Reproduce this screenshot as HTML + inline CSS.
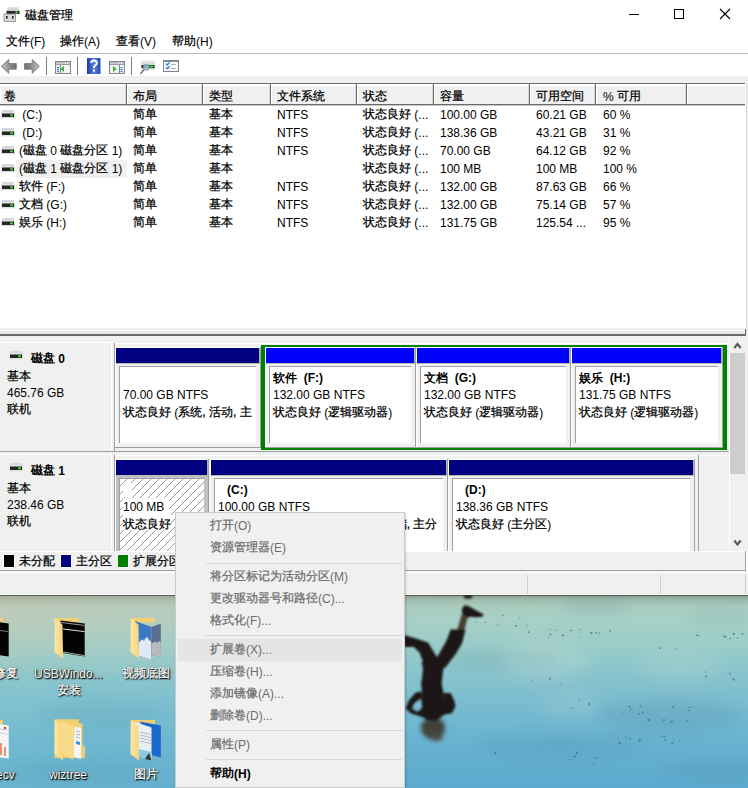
<!DOCTYPE html>
<html><head><meta charset="utf-8"><style>
html,body{margin:0;padding:0;}
body{width:748px;height:788px;overflow:hidden;position:relative;background:#fff;font-family:"Liberation Sans",sans-serif;}
div{position:absolute;}
.t{white-space:nowrap;-webkit-text-stroke:0.25px currentColor;} .l{position:relative;top:1px;-webkit-text-stroke:0;} .l0{-webkit-text-stroke:0;}
svg{display:block;}
</style></head><body>
<svg style="position:absolute;left:3px;top:6px" width="18" height="17" viewBox="0 0 18 17">
<defs><linearGradient id="gt" x1="0" y1="0" x2="0" y2="1"><stop offset="0" stop-color="#e6e8ea"/><stop offset="1" stop-color="#c4c8cc"/></linearGradient></defs>
<path d="M4.5 1 L15.5 1 L16.5 5 L3.5 5 Z" fill="url(#gt)"/>
<rect x="3.5" y="5" width="13" height="3" fill="#2b2b2b"/>
<circle cx="13.5" cy="6.5" r="1.2" fill="#30e030"/>
<rect x="1" y="8" width="11.5" height="7.5" fill="#d8dadc" stroke="#8a8a8a" stroke-width="0.8"/>
<rect x="3" y="10" width="1.6" height="2.6" fill="#222"/>
<rect x="9" y="10" width="1.6" height="2.6" fill="#222"/>
</svg>
<div class="t" style="left:25px;top:5px;font-size:12px;line-height:20px;color:#000;font-weight:normal;">磁盘管理</div>
<div style="left:629px;top:14px;width:10px;height:1px;background:#000;"></div>
<div style="left:674px;top:9px;width:10px;height:10px;background:transparent;border:1px solid #000;box-sizing:border-box"></div>
<svg style="position:absolute;left:719px;top:8px" width="12" height="12" viewBox="0 0 12 12"><path d="M1 1 L11 11 M11 1 L1 11" stroke="#000" stroke-width="1.1"/></svg>
<div class="t" style="left:6px;top:32px;font-size:12px;line-height:18px;color:#000;font-weight:normal;">文件<span class="l">(F)</span></div>
<div class="t" style="left:60px;top:32px;font-size:12px;line-height:18px;color:#000;font-weight:normal;">操作<span class="l">(A)</span></div>
<div class="t" style="left:116px;top:32px;font-size:12px;line-height:18px;color:#000;font-weight:normal;">查看<span class="l">(V)</span></div>
<div class="t" style="left:172px;top:32px;font-size:12px;line-height:18px;color:#000;font-weight:normal;">帮助<span class="l">(H)</span></div>
<div style="left:0px;top:53px;width:748px;height:1px;background:#b9bcc0;"></div>
<div style="left:0px;top:54px;width:748px;height:22px;background:#fff;"></div>
<svg style="position:absolute;left:0px;top:56px" width="44" height="20" viewBox="0 56 44 20">
<defs><linearGradient id="ga" x1="0" y1="0" x2="1" y2="0"><stop offset="0" stop-color="#c4c4c4"/><stop offset="0.6" stop-color="#8a8a8a"/><stop offset="1" stop-color="#6c6c6c"/></linearGradient>
<linearGradient id="gb" x1="1" y1="0" x2="0" y2="0"><stop offset="0" stop-color="#c4c4c4"/><stop offset="0.6" stop-color="#8a8a8a"/><stop offset="1" stop-color="#6c6c6c"/></linearGradient></defs>
<path d="M1.3 66.3 L8.8 59.6 L8.8 63.6 L16.3 63.6 L16.3 69.2 L8.8 69.2 L8.8 73.3 Z" fill="url(#ga)" stroke="#7a7a7a" stroke-width="0.9" stroke-linejoin="round"/>
<path d="M39.5 66.3 L32.2 59.6 L32.2 63.6 L24.5 63.6 L24.5 69.2 L32.2 69.2 L32.2 73.3 Z" fill="url(#gb)" stroke="#7a7a7a" stroke-width="0.9" stroke-linejoin="round"/>
</svg>
<div style="left:46px;top:57px;width:1px;height:18px;background:#808080;"></div>
<div style="left:77px;top:57px;width:1px;height:18px;background:#808080;"></div>
<div style="left:131px;top:57px;width:1px;height:18px;background:#808080;"></div>
<svg style="position:absolute;left:55px;top:61px" width="16" height="13" viewBox="0 0 16 13">
<rect x="0.5" y="0.5" width="15" height="12" fill="#f4f4f4" stroke="#7c8590"/>
<rect x="1" y="1" width="14" height="1.6" fill="#b4bac2"/>
<rect x="1" y="3" width="14" height="0.9" fill="#8a929c"/>
<rect x="12" y="1.2" width="1" height="1" fill="#fff"/><rect x="10" y="1.2" width="1" height="1" fill="#fff"/>
<line x1="5.5" y1="4" x2="5.5" y2="12.5" stroke="#7c8590"/>
<rect x="2" y="6" width="2" height="1.2" fill="#3a7ad0"/><rect x="2" y="8" width="2" height="1.2" fill="#3a7ad0"/><rect x="2" y="10" width="2" height="1.2" fill="#3a7ad0"/><path d="M9 5 L5.5 8 L9 11 Z" fill="#3cb03c"/></svg>
<svg style="position:absolute;left:109px;top:61px" width="16" height="13" viewBox="0 0 16 13">
<rect x="0.5" y="0.5" width="15" height="12" fill="#f4f4f4" stroke="#7c8590"/>
<rect x="1" y="1" width="14" height="1.6" fill="#b4bac2"/>
<rect x="1" y="3" width="14" height="0.9" fill="#8a929c"/>
<rect x="12" y="1.2" width="1" height="1" fill="#fff"/><rect x="10" y="1.2" width="1" height="1" fill="#fff"/>
<line x1="10.5" y1="4" x2="10.5" y2="12.5" stroke="#7c8590"/>
<rect x="11.5" y="6" width="2" height="1.2" fill="#3a7ad0"/><rect x="11.5" y="8" width="2" height="1.2" fill="#3a7ad0"/><rect x="11.5" y="10" width="2" height="1.2" fill="#3a7ad0"/><path d="M4 5 L7.5 8 L4 11 Z" fill="#3cb03c"/></svg>
<svg style="position:absolute;left:87px;top:58px" width="14" height="16" viewBox="0 0 14 16">
<defs><linearGradient id="gh" x1="0" y1="0" x2="1" y2="0"><stop offset="0" stop-color="#1d3aa8"/><stop offset="0.5" stop-color="#5a7ee0"/><stop offset="1" stop-color="#2a48b8"/></linearGradient></defs>
<rect x="0" y="0" width="13.5" height="16" fill="url(#gh)"/>
<path d="M4.2 5 Q4.2 2.5 7 2.5 Q9.8 2.5 9.8 5 Q9.8 6.6 8 7.6 Q7 8.2 7 10" fill="none" stroke="#fff" stroke-width="2"/>
<rect x="6" y="11.5" width="2" height="2" fill="#fff"/>
</svg>
<svg style="position:absolute;left:136px;top:56px" width="24" height="22" viewBox="136 56 24 22">
<defs><linearGradient id="gd" x1="0" y1="0" x2="0" y2="1"><stop offset="0" stop-color="#e6e8ea"/><stop offset="1" stop-color="#c8ccd0"/></linearGradient></defs>
<rect x="141" y="60.5" width="14" height="9" fill="url(#gd)"/>
<rect x="141.5" y="65" width="13" height="3" fill="#2e2e2e"/>
<rect x="150" y="66" width="3.5" height="1.2" fill="#20e020"/><rect x="151.2" y="64.8" width="1.2" height="3.6" fill="#20e020"/>
<circle cx="146.4" cy="67.2" r="3.1" fill="#9cbcd4" fill-opacity="0.85" stroke="#7890a0" stroke-width="0.7"/>
<path d="M144.2 69.6 L140.3 73.8" stroke="#505050" stroke-width="1.2"/>
</svg>
<svg style="position:absolute;left:163px;top:60px" width="16" height="12" viewBox="0 0 16 12">
<rect x="0.5" y="0.5" width="15" height="11" fill="#fafafa" stroke="#7c8590"/>
<rect x="1" y="1" width="14" height="1" fill="#8a9098"/>
<path d="M2.8 3.6 L4.2 5 L6.6 2.4" fill="none" stroke="#2a80e0" stroke-width="1.3"/>
<path d="M2.8 7.4 L4.2 8.8 L6.6 6.2" fill="none" stroke="#2a80e0" stroke-width="1.3"/>
<rect x="8" y="4" width="5" height="0.9" fill="#a8acb0"/><rect x="8" y="8" width="5" height="0.9" fill="#a8acb0"/>
</svg>
<div style="left:0px;top:76px;width:748px;height:7px;background:#f0f0f0;"></div>
<div style="left:0px;top:83px;width:745px;height:1px;background:#6a6a6a;"></div>
<div style="left:746px;top:76px;width:2px;height:260px;background:#f0f0f0;"></div>
<div style="left:745px;top:84px;width:1px;height:244px;background:#fff;"></div>
<div style="left:746px;top:84px;width:1px;height:250px;background:#dcdcdc;"></div>
<div style="left:0px;top:84px;width:745px;height:20px;background:#f0f0f0;"></div>
<div style="left:0px;top:84px;width:745px;height:2px;background:#fff;"></div>
<div style="left:0px;top:104px;width:745px;height:1px;background:#6a6a6a;"></div>
<div style="left:0px;top:105px;width:745px;height:1px;background:#c8c8c8;"></div>
<div style="left:125px;top:85px;width:1px;height:19px;background:#d8d8d8;"></div>
<div style="left:126px;top:84px;width:1px;height:20px;background:#6a6a6a;"></div>
<div style="left:127px;top:85px;width:1px;height:19px;background:#fff;"></div>
<div style="left:201px;top:85px;width:1px;height:19px;background:#d8d8d8;"></div>
<div style="left:202px;top:84px;width:1px;height:20px;background:#6a6a6a;"></div>
<div style="left:203px;top:85px;width:1px;height:19px;background:#fff;"></div>
<div style="left:269px;top:85px;width:1px;height:19px;background:#d8d8d8;"></div>
<div style="left:270px;top:84px;width:1px;height:20px;background:#6a6a6a;"></div>
<div style="left:271px;top:85px;width:1px;height:19px;background:#fff;"></div>
<div style="left:355px;top:85px;width:1px;height:19px;background:#d8d8d8;"></div>
<div style="left:356px;top:84px;width:1px;height:20px;background:#6a6a6a;"></div>
<div style="left:357px;top:85px;width:1px;height:19px;background:#fff;"></div>
<div style="left:432px;top:85px;width:1px;height:19px;background:#d8d8d8;"></div>
<div style="left:433px;top:84px;width:1px;height:20px;background:#6a6a6a;"></div>
<div style="left:434px;top:85px;width:1px;height:19px;background:#fff;"></div>
<div style="left:528px;top:85px;width:1px;height:19px;background:#d8d8d8;"></div>
<div style="left:529px;top:84px;width:1px;height:20px;background:#6a6a6a;"></div>
<div style="left:530px;top:85px;width:1px;height:19px;background:#fff;"></div>
<div style="left:594px;top:85px;width:1px;height:19px;background:#d8d8d8;"></div>
<div style="left:595px;top:84px;width:1px;height:20px;background:#6a6a6a;"></div>
<div style="left:596px;top:85px;width:1px;height:19px;background:#fff;"></div>
<div style="left:685px;top:85px;width:1px;height:19px;background:#d8d8d8;"></div>
<div style="left:686px;top:84px;width:1px;height:20px;background:#6a6a6a;"></div>
<div style="left:687px;top:85px;width:1px;height:19px;background:#fff;"></div>
<div style="left:0px;top:85px;width:1px;height:19px;background:#fff;"></div>
<div class="t" style="left:4px;top:87px;font-size:12px;line-height:18px;color:#000;font-weight:normal;">卷</div>
<div class="t" style="left:133px;top:87px;font-size:12px;line-height:18px;color:#000;font-weight:normal;">布局</div>
<div class="t" style="left:209px;top:87px;font-size:12px;line-height:18px;color:#000;font-weight:normal;">类型</div>
<div class="t" style="left:277px;top:87px;font-size:12px;line-height:18px;color:#000;font-weight:normal;">文件系统</div>
<div class="t" style="left:363px;top:87px;font-size:12px;line-height:18px;color:#000;font-weight:normal;">状态</div>
<div class="t" style="left:440px;top:87px;font-size:12px;line-height:18px;color:#000;font-weight:normal;">容量</div>
<div class="t" style="left:536px;top:87px;font-size:12px;line-height:18px;color:#000;font-weight:normal;">可用空间</div>
<div class="t" style="left:603px;top:87px;font-size:12px;line-height:18px;color:#000;font-weight:normal;"><span class="l">% </span>可用</div>
<div style="left:0px;top:106px;width:745px;height:222px;background:#fff;"></div>
<div style="left:16px;top:160px;width:111px;height:18px;background:#f0f0f0;"></div>
<svg style="position:absolute;left:0px;top:110px" width="16" height="9" viewBox="0 0 16 9">
<rect x="2" y="0" width="12" height="3.5" fill="#d6d9dc"/>
<rect x="1" y="2" width="14" height="6.5" fill="#dfe2e4"/>
<rect x="2" y="3.5" width="12" height="3.5" fill="#252525"/>
<circle cx="11.5" cy="5.2" r="1.3" fill="#30e030"/>
</svg>
<div class="t" style="left:19px;top:105px;font-size:12px;line-height:18px;color:#000;font-weight:normal;"><span class="l">&nbsp;(C:)</span></div>
<div class="t" style="left:133px;top:105px;font-size:12px;line-height:18px;color:#000;font-weight:normal;">简单</div>
<div class="t" style="left:209px;top:105px;font-size:12px;line-height:18px;color:#000;font-weight:normal;">基本</div>
<div class="t" style="left:277px;top:105px;font-size:12px;line-height:18px;color:#000;font-weight:normal;"><span class="l">NTFS</span></div>
<div class="t" style="left:363px;top:105px;font-size:12px;line-height:18px;color:#000;font-weight:normal;">状态良好<span class="l"> (...</span></div>
<div class="t" style="left:440px;top:105px;font-size:12px;line-height:18px;color:#000;font-weight:normal;"><span class="l">100.00 GB</span></div>
<div class="t" style="left:536px;top:105px;font-size:12px;line-height:18px;color:#000;font-weight:normal;"><span class="l">60.21 GB</span></div>
<div class="t" style="left:603px;top:105px;font-size:12px;line-height:18px;color:#000;font-weight:normal;"><span class="l">60 %</span></div>
<svg style="position:absolute;left:0px;top:128px" width="16" height="9" viewBox="0 0 16 9">
<rect x="2" y="0" width="12" height="3.5" fill="#d6d9dc"/>
<rect x="1" y="2" width="14" height="6.5" fill="#dfe2e4"/>
<rect x="2" y="3.5" width="12" height="3.5" fill="#252525"/>
<circle cx="11.5" cy="5.2" r="1.3" fill="#30e030"/>
</svg>
<div class="t" style="left:19px;top:123px;font-size:12px;line-height:18px;color:#000;font-weight:normal;"><span class="l">&nbsp;(D:)</span></div>
<div class="t" style="left:133px;top:123px;font-size:12px;line-height:18px;color:#000;font-weight:normal;">简单</div>
<div class="t" style="left:209px;top:123px;font-size:12px;line-height:18px;color:#000;font-weight:normal;">基本</div>
<div class="t" style="left:277px;top:123px;font-size:12px;line-height:18px;color:#000;font-weight:normal;"><span class="l">NTFS</span></div>
<div class="t" style="left:363px;top:123px;font-size:12px;line-height:18px;color:#000;font-weight:normal;">状态良好<span class="l"> (...</span></div>
<div class="t" style="left:440px;top:123px;font-size:12px;line-height:18px;color:#000;font-weight:normal;"><span class="l">138.36 GB</span></div>
<div class="t" style="left:536px;top:123px;font-size:12px;line-height:18px;color:#000;font-weight:normal;"><span class="l">43.21 GB</span></div>
<div class="t" style="left:603px;top:123px;font-size:12px;line-height:18px;color:#000;font-weight:normal;"><span class="l">31 %</span></div>
<svg style="position:absolute;left:0px;top:146px" width="16" height="9" viewBox="0 0 16 9">
<rect x="2" y="0" width="12" height="3.5" fill="#d6d9dc"/>
<rect x="1" y="2" width="14" height="6.5" fill="#dfe2e4"/>
<rect x="2" y="3.5" width="12" height="3.5" fill="#252525"/>
<circle cx="11.5" cy="5.2" r="1.3" fill="#30e030"/>
</svg>
<div class="t" style="left:19px;top:141px;font-size:12px;line-height:18px;color:#000;font-weight:normal;"><span class="l">(</span>磁盘<span class="l">&nbsp;0&nbsp;</span>磁盘分区<span class="l">&nbsp;1)</span></div>
<div class="t" style="left:133px;top:141px;font-size:12px;line-height:18px;color:#000;font-weight:normal;">简单</div>
<div class="t" style="left:209px;top:141px;font-size:12px;line-height:18px;color:#000;font-weight:normal;">基本</div>
<div class="t" style="left:277px;top:141px;font-size:12px;line-height:18px;color:#000;font-weight:normal;"><span class="l">NTFS</span></div>
<div class="t" style="left:363px;top:141px;font-size:12px;line-height:18px;color:#000;font-weight:normal;">状态良好<span class="l"> (...</span></div>
<div class="t" style="left:440px;top:141px;font-size:12px;line-height:18px;color:#000;font-weight:normal;"><span class="l">70.00 GB</span></div>
<div class="t" style="left:536px;top:141px;font-size:12px;line-height:18px;color:#000;font-weight:normal;"><span class="l">64.12 GB</span></div>
<div class="t" style="left:603px;top:141px;font-size:12px;line-height:18px;color:#000;font-weight:normal;"><span class="l">92 %</span></div>
<svg style="position:absolute;left:0px;top:164px" width="16" height="9" viewBox="0 0 16 9">
<rect x="2" y="0" width="12" height="3.5" fill="#d6d9dc"/>
<rect x="1" y="2" width="14" height="6.5" fill="#dfe2e4"/>
<rect x="2" y="3.5" width="12" height="3.5" fill="#252525"/>
<circle cx="11.5" cy="5.2" r="1.3" fill="#30e030"/>
</svg>
<div class="t" style="left:19px;top:159px;font-size:12px;line-height:18px;color:#000;font-weight:normal;"><span class="l">(</span>磁盘<span class="l">&nbsp;1&nbsp;</span>磁盘分区<span class="l">&nbsp;1)</span></div>
<div class="t" style="left:133px;top:159px;font-size:12px;line-height:18px;color:#000;font-weight:normal;">简单</div>
<div class="t" style="left:209px;top:159px;font-size:12px;line-height:18px;color:#000;font-weight:normal;">基本</div>
<div class="t" style="left:363px;top:159px;font-size:12px;line-height:18px;color:#000;font-weight:normal;">状态良好<span class="l"> (...</span></div>
<div class="t" style="left:440px;top:159px;font-size:12px;line-height:18px;color:#000;font-weight:normal;"><span class="l">100 MB</span></div>
<div class="t" style="left:536px;top:159px;font-size:12px;line-height:18px;color:#000;font-weight:normal;"><span class="l">100 MB</span></div>
<div class="t" style="left:603px;top:159px;font-size:12px;line-height:18px;color:#000;font-weight:normal;"><span class="l">100 %</span></div>
<svg style="position:absolute;left:0px;top:182px" width="16" height="9" viewBox="0 0 16 9">
<rect x="2" y="0" width="12" height="3.5" fill="#d6d9dc"/>
<rect x="1" y="2" width="14" height="6.5" fill="#dfe2e4"/>
<rect x="2" y="3.5" width="12" height="3.5" fill="#252525"/>
<circle cx="11.5" cy="5.2" r="1.3" fill="#30e030"/>
</svg>
<div class="t" style="left:19px;top:177px;font-size:12px;line-height:18px;color:#000;font-weight:normal;">软件<span class="l">&nbsp;(F:)</span></div>
<div class="t" style="left:133px;top:177px;font-size:12px;line-height:18px;color:#000;font-weight:normal;">简单</div>
<div class="t" style="left:209px;top:177px;font-size:12px;line-height:18px;color:#000;font-weight:normal;">基本</div>
<div class="t" style="left:277px;top:177px;font-size:12px;line-height:18px;color:#000;font-weight:normal;"><span class="l">NTFS</span></div>
<div class="t" style="left:363px;top:177px;font-size:12px;line-height:18px;color:#000;font-weight:normal;">状态良好<span class="l"> (...</span></div>
<div class="t" style="left:440px;top:177px;font-size:12px;line-height:18px;color:#000;font-weight:normal;"><span class="l">132.00 GB</span></div>
<div class="t" style="left:536px;top:177px;font-size:12px;line-height:18px;color:#000;font-weight:normal;"><span class="l">87.63 GB</span></div>
<div class="t" style="left:603px;top:177px;font-size:12px;line-height:18px;color:#000;font-weight:normal;"><span class="l">66 %</span></div>
<svg style="position:absolute;left:0px;top:200px" width="16" height="9" viewBox="0 0 16 9">
<rect x="2" y="0" width="12" height="3.5" fill="#d6d9dc"/>
<rect x="1" y="2" width="14" height="6.5" fill="#dfe2e4"/>
<rect x="2" y="3.5" width="12" height="3.5" fill="#252525"/>
<circle cx="11.5" cy="5.2" r="1.3" fill="#30e030"/>
</svg>
<div class="t" style="left:19px;top:195px;font-size:12px;line-height:18px;color:#000;font-weight:normal;">文档<span class="l">&nbsp;(G:)</span></div>
<div class="t" style="left:133px;top:195px;font-size:12px;line-height:18px;color:#000;font-weight:normal;">简单</div>
<div class="t" style="left:209px;top:195px;font-size:12px;line-height:18px;color:#000;font-weight:normal;">基本</div>
<div class="t" style="left:277px;top:195px;font-size:12px;line-height:18px;color:#000;font-weight:normal;"><span class="l">NTFS</span></div>
<div class="t" style="left:363px;top:195px;font-size:12px;line-height:18px;color:#000;font-weight:normal;">状态良好<span class="l"> (...</span></div>
<div class="t" style="left:440px;top:195px;font-size:12px;line-height:18px;color:#000;font-weight:normal;"><span class="l">132.00 GB</span></div>
<div class="t" style="left:536px;top:195px;font-size:12px;line-height:18px;color:#000;font-weight:normal;"><span class="l">75.14 GB</span></div>
<div class="t" style="left:603px;top:195px;font-size:12px;line-height:18px;color:#000;font-weight:normal;"><span class="l">57 %</span></div>
<svg style="position:absolute;left:0px;top:218px" width="16" height="9" viewBox="0 0 16 9">
<rect x="2" y="0" width="12" height="3.5" fill="#d6d9dc"/>
<rect x="1" y="2" width="14" height="6.5" fill="#dfe2e4"/>
<rect x="2" y="3.5" width="12" height="3.5" fill="#252525"/>
<circle cx="11.5" cy="5.2" r="1.3" fill="#30e030"/>
</svg>
<div class="t" style="left:19px;top:213px;font-size:12px;line-height:18px;color:#000;font-weight:normal;">娱乐<span class="l">&nbsp;(H:)</span></div>
<div class="t" style="left:133px;top:213px;font-size:12px;line-height:18px;color:#000;font-weight:normal;">简单</div>
<div class="t" style="left:209px;top:213px;font-size:12px;line-height:18px;color:#000;font-weight:normal;">基本</div>
<div class="t" style="left:277px;top:213px;font-size:12px;line-height:18px;color:#000;font-weight:normal;"><span class="l">NTFS</span></div>
<div class="t" style="left:363px;top:213px;font-size:12px;line-height:18px;color:#000;font-weight:normal;">状态良好<span class="l"> (...</span></div>
<div class="t" style="left:440px;top:213px;font-size:12px;line-height:18px;color:#000;font-weight:normal;"><span class="l">131.75 GB</span></div>
<div class="t" style="left:536px;top:213px;font-size:12px;line-height:18px;color:#000;font-weight:normal;"><span class="l">125.54 ...</span></div>
<div class="t" style="left:603px;top:213px;font-size:12px;line-height:18px;color:#000;font-weight:normal;"><span class="l">95 %</span></div>
<div style="left:0px;top:328px;width:745px;height:2px;background:#f0f0f0;"></div>
<div style="left:0px;top:330px;width:745px;height:1px;background:#fff;"></div>
<div style="left:0px;top:331px;width:745px;height:3px;background:#e8e8e8;"></div>
<div style="left:0px;top:334px;width:746px;height:2px;background:#6a6a6a;"></div>
<div style="left:745px;top:329px;width:1px;height:6px;background:#6a6a6a;"></div>
<div style="left:0px;top:336px;width:748px;height:215px;background:#f0f0f0;"></div>
<div style="left:729px;top:336px;width:1px;height:215px;background:#fff;"></div>
<div style="left:730px;top:336px;width:15px;height:215px;background:#f0f0f0;"></div>
<div style="left:730px;top:353px;width:15px;height:121px;background:#cdcdcd;"></div>
<svg style="position:absolute;left:730px;top:340px" width="15" height="10" viewBox="0 0 15 10"><path d="M4.3 8 L7.5 4 L10.7 8" fill="none" stroke="#5a5a5a" stroke-width="2.1"/></svg>
<svg style="position:absolute;left:730px;top:538px" width="15" height="10" viewBox="0 0 15 10"><path d="M4.3 2.5 L7.5 6.5 L10.7 2.5" fill="none" stroke="#5a5a5a" stroke-width="2.1"/></svg>
<div style="left:745px;top:336px;width:3px;height:215px;background:#f0f0f0;"></div>
<div style="left:0px;top:342px;width:112px;height:1px;background:#fff;"></div>
<div style="left:111px;top:342px;width:1px;height:109px;background:#fff;"></div>
<div style="left:0px;top:451px;width:729px;height:1px;background:#a0a0a0;"></div>
<div style="left:114px;top:343px;width:1px;height:108px;background:#a0a0a0;"></div>
<div style="left:115px;top:343px;width:614px;height:1px;background:#fff;"></div>
<svg style="position:absolute;left:8px;top:351px" width="16" height="9" viewBox="0 0 16 9">
<rect x="2" y="0" width="12" height="3.5" fill="#d6d9dc"/>
<rect x="1" y="2" width="14" height="6.5" fill="#dfe2e4"/>
<rect x="2" y="3.5" width="12" height="3.5" fill="#252525"/>
<circle cx="11.5" cy="5.2" r="1.3" fill="#30e030"/>
</svg>
<div class="t" style="left:31px;top:349px;font-size:12px;line-height:18px;color:#000;font-weight:bold;-webkit-text-stroke:0;">磁盘<span class="l"> 0</span></div>
<div class="t" style="left:7px;top:367px;font-size:12px;line-height:18px;color:#000;font-weight:normal;">基本</div>
<div class="t" style="left:7px;top:383px;font-size:12px;line-height:18px;color:#000;font-weight:normal;"><span class="l">465.76 GB</span></div>
<div class="t" style="left:7px;top:400px;font-size:12px;line-height:18px;color:#000;font-weight:normal;">联机</div>
<div style="left:115px;top:347px;width:146px;height:101px;background:#f0f0f0;"></div>
<div style="left:115px;top:347px;width:1px;height:101px;background:#fff;"></div>
<div style="left:115px;top:347px;width:145px;height:1px;background:#fff;"></div>
<div style="left:260px;top:347px;width:1px;height:101px;background:#a0a0a0;"></div>
<div style="left:116px;top:348px;width:143px;height:15px;background:#000080;"></div>
<div style="left:116px;top:363px;width:144px;height:1px;background:#b8b8b0;"></div>
<div style="left:259px;top:348px;width:1px;height:15px;background:#b0b0b0;"></div>
<div style="left:119px;top:366px;width:137px;height:77px;background:#fff;border-left:1px solid #a0a0a0;border-top:1px solid #a0a0a0;box-sizing:border-box;"></div>
<div class="t" style="left:123px;top:369px;font-size:12px;line-height:18px;color:#000;font-weight:None;"></div>
<div class="t" style="left:123px;top:386px;font-size:12px;line-height:18px;color:#000;font-weight:normal;"><span class="l0">70.00 GB NTFS</span></div>
<div class="t" style="left:123px;top:403px;font-size:12px;line-height:18px;color:#000;font-weight:normal;">状态良好<span class="l"> (</span>系统, 活动, 主</div>
<div style="left:115px;top:447px;width:146px;height:1px;background:#a0a0a0;"></div>
<div style="left:261px;top:345px;width:466px;height:105px;background:#008000;"></div>
<div style="left:265px;top:347px;width:458px;height:101px;background:#f0f0f0;"></div>
<div style="left:265px;top:347px;width:151px;height:101px;background:#f0f0f0;"></div>
<div style="left:265px;top:347px;width:1px;height:101px;background:#fff;"></div>
<div style="left:265px;top:347px;width:150px;height:1px;background:#fff;"></div>
<div style="left:415px;top:347px;width:1px;height:101px;background:#a0a0a0;"></div>
<div style="left:266px;top:348px;width:148px;height:15px;background:#0000ff;"></div>
<div style="left:266px;top:363px;width:149px;height:1px;background:#b8b8b0;"></div>
<div style="left:414px;top:348px;width:1px;height:15px;background:#b0b0b0;"></div>
<div style="left:269px;top:366px;width:142px;height:77px;background:#fff;border-left:1px solid #a0a0a0;border-top:1px solid #a0a0a0;box-sizing:border-box;"></div>
<div class="t" style="left:273px;top:369px;font-size:12px;line-height:18px;color:#000;font-weight:bold;-webkit-text-stroke:0;">软件<span class="l0">&nbsp;&nbsp;(F:)</span></div>
<div class="t" style="left:273px;top:386px;font-size:12px;line-height:18px;color:#000;font-weight:normal;"><span class="l0">132.00 GB NTFS</span></div>
<div class="t" style="left:273px;top:403px;font-size:12px;line-height:18px;color:#000;font-weight:normal;">状态良好<span class="l"> (</span>逻辑驱动器<span class="l">)</span></div>
<div style="left:265px;top:447px;width:151px;height:1px;background:#a0a0a0;"></div>
<div style="left:416px;top:347px;width:155px;height:101px;background:#f0f0f0;"></div>
<div style="left:416px;top:347px;width:1px;height:101px;background:#fff;"></div>
<div style="left:416px;top:347px;width:154px;height:1px;background:#fff;"></div>
<div style="left:570px;top:347px;width:1px;height:101px;background:#a0a0a0;"></div>
<div style="left:417px;top:348px;width:152px;height:15px;background:#0000ff;"></div>
<div style="left:417px;top:363px;width:153px;height:1px;background:#b8b8b0;"></div>
<div style="left:569px;top:348px;width:1px;height:15px;background:#b0b0b0;"></div>
<div style="left:420px;top:366px;width:146px;height:77px;background:#fff;border-left:1px solid #a0a0a0;border-top:1px solid #a0a0a0;box-sizing:border-box;"></div>
<div class="t" style="left:424px;top:369px;font-size:12px;line-height:18px;color:#000;font-weight:bold;-webkit-text-stroke:0;">文档<span class="l0">&nbsp;&nbsp;(G:)</span></div>
<div class="t" style="left:424px;top:386px;font-size:12px;line-height:18px;color:#000;font-weight:normal;"><span class="l0">132.00 GB NTFS</span></div>
<div class="t" style="left:424px;top:403px;font-size:12px;line-height:18px;color:#000;font-weight:normal;">状态良好<span class="l"> (</span>逻辑驱动器<span class="l">)</span></div>
<div style="left:416px;top:447px;width:155px;height:1px;background:#a0a0a0;"></div>
<div style="left:571px;top:347px;width:152px;height:101px;background:#f0f0f0;"></div>
<div style="left:571px;top:347px;width:1px;height:101px;background:#fff;"></div>
<div style="left:571px;top:347px;width:151px;height:1px;background:#fff;"></div>
<div style="left:722px;top:347px;width:1px;height:101px;background:#a0a0a0;"></div>
<div style="left:572px;top:348px;width:149px;height:15px;background:#0000ff;"></div>
<div style="left:572px;top:363px;width:150px;height:1px;background:#b8b8b0;"></div>
<div style="left:721px;top:348px;width:1px;height:15px;background:#b0b0b0;"></div>
<div style="left:575px;top:366px;width:143px;height:77px;background:#fff;border-left:1px solid #a0a0a0;border-top:1px solid #a0a0a0;box-sizing:border-box;"></div>
<div class="t" style="left:579px;top:369px;font-size:12px;line-height:18px;color:#000;font-weight:bold;-webkit-text-stroke:0;">娱乐<span class="l0">&nbsp;&nbsp;(H:)</span></div>
<div class="t" style="left:579px;top:386px;font-size:12px;line-height:18px;color:#000;font-weight:normal;"><span class="l0">131.75 GB NTFS</span></div>
<div class="t" style="left:579px;top:403px;font-size:12px;line-height:18px;color:#000;font-weight:normal;">状态良好<span class="l"> (</span>逻辑驱动器<span class="l">)</span></div>
<div style="left:571px;top:447px;width:152px;height:1px;background:#a0a0a0;"></div>
<div style="left:0px;top:454px;width:112px;height:1px;background:#fff;"></div>
<div style="left:111px;top:454px;width:1px;height:109px;background:#fff;"></div>
<div style="left:0px;top:563px;width:729px;height:1px;background:#a0a0a0;"></div>
<div style="left:114px;top:455px;width:1px;height:108px;background:#a0a0a0;"></div>
<div style="left:115px;top:455px;width:614px;height:1px;background:#fff;"></div>
<svg style="position:absolute;left:8px;top:463px" width="16" height="9" viewBox="0 0 16 9">
<rect x="2" y="0" width="12" height="3.5" fill="#d6d9dc"/>
<rect x="1" y="2" width="14" height="6.5" fill="#dfe2e4"/>
<rect x="2" y="3.5" width="12" height="3.5" fill="#252525"/>
<circle cx="11.5" cy="5.2" r="1.3" fill="#30e030"/>
</svg>
<div class="t" style="left:31px;top:461px;font-size:12px;line-height:18px;color:#000;font-weight:bold;-webkit-text-stroke:0;">磁盘<span class="l"> 1</span></div>
<div class="t" style="left:7px;top:479px;font-size:12px;line-height:18px;color:#000;font-weight:normal;">基本</div>
<div class="t" style="left:7px;top:495px;font-size:12px;line-height:18px;color:#000;font-weight:normal;"><span class="l">238.46 GB</span></div>
<div class="t" style="left:7px;top:512px;font-size:12px;line-height:18px;color:#000;font-weight:normal;">联机</div>
<div style="left:698px;top:455px;width:1px;height:96px;background:#a0a0a0;"></div>
<div style="left:115px;top:459px;width:94px;height:92px;background:#f0f0f0;"></div>
<div style="left:115px;top:459px;width:1px;height:92px;background:#fff;"></div>
<div style="left:115px;top:459px;width:93px;height:1px;background:#fff;"></div>
<div style="left:208px;top:459px;width:1px;height:92px;background:#a0a0a0;"></div>
<div style="left:116px;top:460px;width:91px;height:15px;background:#000080;"></div>
<div style="left:116px;top:475px;width:92px;height:1px;background:#b8b8b0;"></div>
<div style="left:207px;top:460px;width:1px;height:15px;background:#b0b0b0;"></div>
<div style="left:116px;top:476px;width:92px;height:75px;background:#c0c0c0;"></div>
<div style="left:119px;top:478px;width:85px;height:77px;background:#fff;border-left:1px solid #a0a0a0;border-top:1px solid #a0a0a0;box-sizing:border-box;overflow:hidden;"></div>
<svg style="position:absolute;left:120px;top:479px" width="84" height="76" shape-rendering="crispEdges"><defs><pattern id="hp" x="7" y="0" width="8" height="8" patternUnits="userSpaceOnUse"><g fill="#9a9a9a"><rect x="0" y="7" width="1" height="1"/><rect x="1" y="6" width="1" height="1"/><rect x="2" y="5" width="1" height="1"/><rect x="3" y="4" width="1" height="1"/><rect x="4" y="3" width="1" height="1"/><rect x="5" y="2" width="1" height="1"/><rect x="6" y="1" width="1" height="1"/><rect x="7" y="0" width="1" height="1"/></g></pattern></defs><rect width="84" height="76" fill="url(#hp)"/></svg>
<div style="left:123px;top:483px;width:9px;height:14px;background:#fff;"></div>
<div style="left:123px;top:498px;width:46px;height:15px;background:#fff;"></div>
<div style="left:123px;top:513px;width:48px;height:17px;background:#fff;"></div>
<div class="t" style="left:123px;top:481px;font-size:12px;line-height:18px;color:#000;font-weight:None;"></div>
<div class="t" style="left:123px;top:498px;font-size:12px;line-height:18px;color:#000;font-weight:normal;"><span class="l0">100 MB</span></div>
<div class="t" style="left:123px;top:515px;font-size:12px;line-height:18px;color:#000;font-weight:normal;">状态良好</div>
<div style="left:210px;top:459px;width:238px;height:92px;background:#f0f0f0;"></div>
<div style="left:210px;top:459px;width:1px;height:92px;background:#fff;"></div>
<div style="left:210px;top:459px;width:237px;height:1px;background:#fff;"></div>
<div style="left:447px;top:459px;width:1px;height:92px;background:#a0a0a0;"></div>
<div style="left:211px;top:460px;width:235px;height:15px;background:#000080;"></div>
<div style="left:211px;top:475px;width:236px;height:1px;background:#b8b8b0;"></div>
<div style="left:446px;top:460px;width:1px;height:15px;background:#b0b0b0;"></div>
<div style="left:214px;top:478px;width:229px;height:77px;background:#fff;border-left:1px solid #a0a0a0;border-top:1px solid #a0a0a0;box-sizing:border-box;"></div>
<div class="t" style="left:218px;top:481px;font-size:12px;line-height:18px;color:#000;font-weight:bold;-webkit-text-stroke:0;"><span style="padding-left:9px">(C:)</span></div>
<div class="t" style="left:218px;top:498px;font-size:12px;line-height:18px;color:#000;font-weight:normal;"><span class="l0">100.00 GB NTFS</span></div>
<div class="t" style="left:218px;top:515px;font-size:12px;line-height:18px;color:#000;font-weight:normal;">状态良好<span class="l"> (</span>启动, 页面文件, 故障转储, 主分</div>
<div style="left:448px;top:459px;width:247px;height:92px;background:#f0f0f0;"></div>
<div style="left:448px;top:459px;width:1px;height:92px;background:#fff;"></div>
<div style="left:448px;top:459px;width:246px;height:1px;background:#fff;"></div>
<div style="left:694px;top:459px;width:1px;height:92px;background:#a0a0a0;"></div>
<div style="left:449px;top:460px;width:244px;height:15px;background:#000080;"></div>
<div style="left:449px;top:475px;width:245px;height:1px;background:#b8b8b0;"></div>
<div style="left:693px;top:460px;width:1px;height:15px;background:#b0b0b0;"></div>
<div style="left:452px;top:478px;width:238px;height:77px;background:#fff;border-left:1px solid #a0a0a0;border-top:1px solid #a0a0a0;box-sizing:border-box;"></div>
<div class="t" style="left:456px;top:481px;font-size:12px;line-height:18px;color:#000;font-weight:bold;-webkit-text-stroke:0;"><span style="padding-left:9px">(D:)</span></div>
<div class="t" style="left:456px;top:498px;font-size:12px;line-height:18px;color:#000;font-weight:normal;"><span class="l0">138.36 GB NTFS</span></div>
<div class="t" style="left:456px;top:515px;font-size:12px;line-height:18px;color:#000;font-weight:normal;">状态良好<span class="l"> (</span>主分区<span class="l">)</span></div>
<div style="left:0px;top:551px;width:745px;height:19px;background:#f0f0f0;"></div>
<div style="left:0px;top:551px;width:745px;height:1px;background:#fff;"></div>
<div style="left:0px;top:570px;width:746px;height:1px;background:#a0a0a0;"></div>
<div style="left:745px;top:551px;width:1px;height:20px;background:#a0a0a0;"></div>
<div style="left:3px;top:554px;width:12px;height:14px;background:#fff;"></div>
<div style="left:4px;top:555px;width:10px;height:12px;background:#000;"></div>
<div class="t" style="left:19px;top:552px;font-size:12px;line-height:18px;color:#000;font-weight:normal;">未分配</div>
<div style="left:60px;top:554px;width:12px;height:14px;background:#fff;"></div>
<div style="left:61px;top:555px;width:10px;height:12px;background:#000080;"></div>
<div class="t" style="left:76px;top:552px;font-size:12px;line-height:18px;color:#000;font-weight:normal;">主分区</div>
<div style="left:117px;top:554px;width:12px;height:14px;background:#fff;"></div>
<div style="left:118px;top:555px;width:10px;height:12px;background:#008000;"></div>
<div class="t" style="left:133px;top:552px;font-size:12px;line-height:18px;color:#000;font-weight:normal;">扩展分区</div>
<div style="left:0px;top:571px;width:748px;height:24px;background:#f0f0f0;"></div>
<div style="left:0px;top:572px;width:748px;height:1px;background:#fff;"></div>
<div style="left:527px;top:575px;width:1px;height:19px;background:#d0d0d0;"></div>
<div style="left:660px;top:575px;width:1px;height:19px;background:#d0d0d0;"></div>
<div style="left:745px;top:575px;width:1px;height:19px;background:#d0d0d0;"></div>
<div style="left:0;top:595px;width:748px;height:193px;background:linear-gradient(180deg,#94a898 0px,#aac8ba 5px,#a8d0c6 22px,#9ecec8 44px,#8cc6cc 72px,#7abcd0 108px,#68b2d0 146px,#5caace 193px);"></div>
<div style="left:0;top:595px;width:748px;height:193px;background:linear-gradient(90deg,rgba(150,215,205,0.22) 0px,rgba(150,215,205,0.10) 200px,rgba(150,215,205,0) 420px);"></div>
<div style="left:0;top:595px;width:748px;height:90px;background:linear-gradient(90deg,rgba(205,200,178,0.6) 0px,rgba(205,200,178,0.35) 180px,rgba(205,200,178,0) 420px);-webkit-mask-image:linear-gradient(180deg,#000 0px,#000 20px,transparent 90px);"></div>
<div style="left:0px;top:594px;width:748px;height:1px;background:#fafafa;"></div>
<div style="left:0px;top:595px;width:748px;height:1px;background:#5a6058;"></div>
<div style="left:0;top:596px;width:748px;height:10px;background:linear-gradient(90deg,rgba(150,150,130,0.45) 0px,rgba(130,150,135,0.35) 400px,rgba(110,150,135,0.45) 748px);-webkit-mask-image:linear-gradient(180deg,#000,transparent);"></div>
<div style="left:560px;top:600px;width:70px;height:14px;border-radius:50%;background:rgba(40,90,120,0.1);filter:blur(6px);"></div>
<div style="left:690px;top:612px;width:60px;height:10px;border-radius:50%;background:rgba(40,90,120,0.12);filter:blur(6px);"></div>
<div style="left:440px;top:650px;width:120px;height:20px;border-radius:50%;background:rgba(40,90,120,0.08);filter:blur(6px);"></div>
<div style="left:600px;top:700px;width:140px;height:30px;border-radius:50%;background:rgba(40,90,120,0.1);filter:blur(6px);"></div>
<div style="left:480px;top:735px;width:160px;height:24px;border-radius:50%;background:rgba(40,90,120,0.08);filter:blur(6px);"></div>
<div style="left:660px;top:760px;width:120px;height:20px;border-radius:50%;background:rgba(40,90,120,0.07);filter:blur(6px);"></div>
<div style="left:40px;top:700px;width:120px;height:30px;border-radius:50%;background:rgba(40,90,120,0.06);filter:blur(6px);"></div>
<div style="left:0px;top:760px;width:150px;height:20px;border-radius:50%;background:rgba(40,90,120,0.06);filter:blur(6px);"></div>
<div style="left:500px;top:640px;width:90px;height:40px;border-radius:50%;background:rgba(235,240,220,0.18);filter:blur(8px);"></div>
<div style="left:640px;top:650px;width:80px;height:30px;border-radius:50%;background:rgba(235,240,220,0.12);filter:blur(8px);"></div>
<div style="left:540px;top:690px;width:60px;height:30px;border-radius:50%;background:rgba(235,240,220,0.1);filter:blur(8px);"></div>
<svg style="position:absolute;left:404px;top:595px" width="100" height="160" viewBox="404 595 100 160">
<defs><filter id="bl" x="-20%" y="-20%" width="140%" height="140%"><feGaussianBlur stdDeviation="0.8"/></filter>
<filter id="bl2" x="-50%" y="-50%" width="200%" height="200%"><feGaussianBlur stdDeviation="2.2"/></filter></defs>
<g filter="url(#bl2)" opacity="0.85">
<ellipse cx="433" cy="728" rx="12" ry="11" fill="#3a2e22"/><ellipse cx="436" cy="737" rx="7" ry="4" fill="#4a3a2a"/>
</g>
<g filter="url(#bl)" fill="#1c1812">
<path d="M463 595 L473 595 L471 598.5 L465 598.5 Z"/>
<path d="M461.8 609.4 L464.2 605.2 L467.8 605.8 L476.2 610.6 L483.4 614.3 L482.8 616.7 L476.2 617.3 L470.2 616.7 L466.6 617.9 L462.4 614.3 Z"/>
<path d="M461.8 614.3 L467.8 617.3 L464.2 630.5 L457 630.5 Z" fill="#4e3e2e"/>
<path d="M450.5 629.5 L465.5 629.5 L462 643.5 L456 653.5 L445 668 L435 660 L438.6 654.5 L447 640 Z"/>
<circle cx="448" cy="640" r="1.6"/>
<path d="M404 635 L416 638.5 L428 642.5 L437.5 658 L439 672 L422.5 675 L423.5 663 L419.5 652.5 L413.8 647 L404 647 Z"/>
<path d="M421.5 662 L445 662 L443.7 667.2 L442.9 672.1 L441.7 683.6 L443.4 692.7 L444.5 714.4 L436 721 L426 720 L423.4 714.4 L422.3 695 L421.1 683.6 L423.4 669.9 Z"/>
<path d="M443.4 692.7 L450.9 693.3 L454.3 700.7 L455.4 706.4 L452 713.3 L444 714.4 Z"/>
<path fill-rule="evenodd" d="M421.1 691.6 L415.4 692.7 L408.6 700.7 L405.7 708.7 L410.9 713.3 L421.1 716.7 L426.9 719 L424 700 Z M414.3 703 L421.1 698.4 L422.3 707.6 L417.7 712.1 L412 708.7 Z"/>
</g>
</svg>
<svg style="position:absolute;left:0;top:0" width="748" height="788"><defs><filter id="sb"><feGaussianBlur stdDeviation="0.5"/></filter></defs><g fill="#3a5664" opacity="0.55" filter="url(#sb)"><circle cx="570.9" cy="630.5" r="0.99"/><circle cx="550.8" cy="634.4" r="0.82"/><circle cx="549.6" cy="634.1" r="0.62"/><circle cx="579.7" cy="629.7" r="0.65"/><circle cx="579.0" cy="637.3" r="0.67"/><circle cx="562.9" cy="635.3" r="1.17"/><circle cx="591.2" cy="633.0" r="1.19"/><circle cx="548.7" cy="637.6" r="0.77"/><circle cx="556.5" cy="630.2" r="0.79"/><circle cx="610.3" cy="630.8" r="0.95"/><circle cx="596.1" cy="632.7" r="0.93"/><circle cx="550.0" cy="629.6" r="0.72"/><circle cx="599.4" cy="633.3" r="0.79"/><circle cx="591.8" cy="633.5" r="0.78"/><circle cx="737.7" cy="638.0" r="0.75"/><circle cx="724.5" cy="636.3" r="1.13"/><circle cx="733.8" cy="633.9" r="1.19"/><circle cx="697.1" cy="635.2" r="1.05"/><circle cx="699.1" cy="635.9" r="0.62"/><circle cx="730.1" cy="638.6" r="0.94"/><circle cx="742.5" cy="634.1" r="1.02"/><circle cx="725.7" cy="636.8" r="0.87"/><circle cx="687.2" cy="721.1" r="0.88"/><circle cx="673.1" cy="707.0" r="1.02"/><circle cx="671.8" cy="721.9" r="1.09"/><circle cx="642.8" cy="712.2" r="1.00"/><circle cx="621.8" cy="713.4" r="0.70"/><circle cx="629.4" cy="706.9" r="1.06"/><circle cx="630.3" cy="710.0" r="0.83"/><circle cx="689.7" cy="707.3" r="0.87"/><circle cx="664.0" cy="720.1" r="1.09"/><circle cx="689.1" cy="710.5" r="0.85"/><circle cx="648.7" cy="720.1" r="1.17"/><circle cx="632.1" cy="708.8" r="0.74"/><circle cx="638.7" cy="713.8" r="0.95"/><circle cx="641.0" cy="706.1" r="0.85"/><circle cx="639.5" cy="740.5" r="1.17"/><circle cx="665.2" cy="740.1" r="0.97"/><circle cx="664.1" cy="736.4" r="1.14"/><circle cx="672.4" cy="743.0" r="1.08"/><circle cx="641.4" cy="739.2" r="0.66"/><circle cx="660.7" cy="736.5" r="0.64"/><circle cx="626.7" cy="737.3" r="0.80"/><circle cx="614.2" cy="736.0" r="0.69"/><circle cx="618.1" cy="738.9" r="0.62"/><circle cx="679.9" cy="740.9" r="0.69"/><circle cx="630.2" cy="738.8" r="0.82"/><circle cx="619.8" cy="742.8" r="1.20"/><circle cx="498.0" cy="624.7" r="0.65"/><circle cx="476.1" cy="621.9" r="0.76"/><circle cx="519.7" cy="618.2" r="0.61"/><circle cx="527.1" cy="625.6" r="0.69"/><circle cx="502.6" cy="615.5" r="0.92"/><circle cx="528.7" cy="632.3" r="1.02"/><circle cx="485.7" cy="622.3" r="0.70"/><circle cx="516.3" cy="625.7" r="1.07"/><circle cx="549.8" cy="678.9" r="1.09"/><circle cx="589.1" cy="704.1" r="1.08"/><circle cx="579.1" cy="699.6" r="0.74"/><circle cx="561.1" cy="684.2" r="0.62"/><circle cx="531.7" cy="681.2" r="0.76"/><circle cx="571.6" cy="708.3" r="0.87"/><circle cx="733.7" cy="679.5" r="1.17"/><circle cx="676.5" cy="648.8" r="0.74"/><circle cx="659.7" cy="648.2" r="0.97"/><circle cx="730.0" cy="673.6" r="0.89"/><circle cx="705.3" cy="672.0" r="0.65"/><circle cx="706.1" cy="676.4" r="1.07"/><circle cx="570.0" cy="759.6" r="0.71"/><circle cx="574.7" cy="756.7" r="1.08"/><circle cx="596.6" cy="757.9" r="0.84"/><circle cx="593.6" cy="764.5" r="0.70"/><circle cx="495.2" cy="753.0" r="1.14"/><circle cx="576.8" cy="752.9" r="1.10"/></g></svg>
<svg style="position:absolute;left:54px;top:617px" width="33" height="44" viewBox="0 0 33 44">
<defs><linearGradient id="fg" x1="0" y1="0" x2="1" y2="0"><stop offset="0" stop-color="#fde7a4"/><stop offset="1" stop-color="#f6d47e"/></linearGradient></defs>
<path d="M1 1 L25 1 L25 5.5 L1 5.5 Z" fill="#f2cf72"/><path d="M6.5 3.5 L30.7 6.4 L30.7 39.6 L9 36 Z" fill="#040404"/><path d="M7 5.5 L30.5 8.4" stroke="#bbb" stroke-width="0.8"/><path d="M9 12 L30.5 14.6" stroke="#ddd" stroke-width="1"/><path d="M9 35 L30.5 38.6" stroke="#aaa" stroke-width="1"/><path d="M0.7 1 L8.5 7.8 L9 41.5 L0.5 35 Z" fill="url(#fg)"/></svg>
<svg style="position:absolute;left:130px;top:617px" width="33" height="44" viewBox="0 0 33 44">
<defs><linearGradient id="fg" x1="0" y1="0" x2="1" y2="0"><stop offset="0" stop-color="#fde7a4"/><stop offset="1" stop-color="#f6d47e"/></linearGradient></defs>
<path d="M1 1 L25 1 L25 5.5 L1 5.5 Z" fill="#f2cf72"/><path d="M5 4 L21.5 10 L21.5 42.6 L9 39 Z" fill="#3c78c4"/><path d="M9 26 Q12 20 14 24 Q17 17 19 23 L21.5 25 L21.5 42.6 L9 39 Z" fill="#dfeaf6"/><path d="M21.5 10 L30.8 6.5 L30.8 39.6 L21.5 38.5 Z" fill="#5a7090"/><path d="M21.5 27 Q25 23 27 26 Q29 23 30.8 25 L30.8 39.6 L21.5 38.5 Z" fill="#b8bcc0"/><path d="M0.7 1 L8.5 7.8 L9 41.5 L0.5 35 Z" fill="url(#fg)"/></svg>
<svg style="position:absolute;left:-22px;top:617px" width="33" height="44" viewBox="0 0 33 44">
<defs><linearGradient id="fg" x1="0" y1="0" x2="1" y2="0"><stop offset="0" stop-color="#fde7a4"/><stop offset="1" stop-color="#f6d47e"/></linearGradient></defs>
<path d="M1 1 L25 1 L25 5.5 L1 5.5 Z" fill="#f2cf72"/><path d="M6.5 3.5 L30.7 6.4 L30.7 39.6 L9 36 Z" fill="#040404"/><path d="M9 12 L30.5 14.6" stroke="#999" stroke-width="0.8"/><path d="M0.7 1 L8.5 7.8 L9 41.5 L0.5 35 Z" fill="url(#fg)"/></svg>
<svg style="position:absolute;left:54px;top:719px" width="33" height="44" viewBox="0 0 33 44">
<defs><linearGradient id="fg" x1="0" y1="0" x2="1" y2="0"><stop offset="0" stop-color="#fde7a4"/><stop offset="1" stop-color="#f6d47e"/></linearGradient></defs>
<path d="M0.5 0.3 L25 0.3 L25 4 L28.5 4.5 L28.5 27 L31 27.5 L31 39 L0.5 39 Z" fill="#f2cf72"/><path d="M20.5 7.5 L27 9 L27 40 L19.5 38 Z" fill="#f6f6f6"/><path d="M22 12 L26 13 M22 15 L26 16 M22 18 L26 19" stroke="#7aa8d8" stroke-width="0.8"/><path d="M22 22 L26 23 L26 26 L22 25 Z" fill="#3a90d8"/><path d="M5 2 L20.5 8 L19 40.5 L9 36 Z" fill="#f8dc8c"/><path d="M0.7 1 L8.5 7.8 L9 41.5 L0.5 35 Z" fill="url(#fg)"/></svg>
<svg style="position:absolute;left:130px;top:719px" width="33" height="44" viewBox="0 0 33 44">
<defs><linearGradient id="fg" x1="0" y1="0" x2="1" y2="0"><stop offset="0" stop-color="#fde7a4"/><stop offset="1" stop-color="#f6d47e"/></linearGradient></defs>
<path d="M1 1 L25 1 L25 5.5 L1 5.5 Z" fill="#f2cf72"/><path d="M10 2.5 L30.8 6.5 L30.8 38.5 L21.5 36 Z" fill="#1a68cc"/><path d="M5 3 L21.5 8.5 L21.5 41.5 L9 37.5 Z" fill="#e9eef0"/><path d="M10 13 L21 15.5 M10 16 L21 18.5 M10 19 L21 21.5 M10 22 L21 24.5" stroke="#a8b0b8" stroke-width="0.8"/><path d="M9 30 L21.5 33 L21.5 41.5 L9 37.5 Z" fill="#8cc8e0"/><path d="M15 40 L19 34 L21.5 41.5 Z" fill="#333"/><path d="M0.7 1 L8.5 7.8 L9 41.5 L0.5 35 Z" fill="url(#fg)"/></svg>
<svg style="position:absolute;left:-22px;top:719px" width="33" height="44" viewBox="0 0 33 44">
<defs><linearGradient id="fg" x1="0" y1="0" x2="1" y2="0"><stop offset="0" stop-color="#fde7a4"/><stop offset="1" stop-color="#f6d47e"/></linearGradient></defs>
<path d="M1 1 L25 1 L25 5.5 L1 5.5 Z" fill="#f2cf72"/><path d="M5 3 L30.7 6.4 L30.7 39.6 L9 37 Z" fill="#f6f6f8"/><path d="M22 24 L24 24 L24 36 L22 36 Z M26 28 L28 28 L28 37 L26 37 Z" fill="#e89070"/><path d="M22 10 L30 11 M22 14 L30 15" stroke="#c0c8d0" stroke-width="0.8"/><circle cx="27" cy="9" r="1.2" fill="#d04020"/><path d="M0.7 1 L8.5 7.8 L9 41.5 L0.5 35 Z" fill="url(#fg)"/></svg>
<div class="t" style="left:-6px;top:664px;font-size:12px;line-height:18px;color:#fff;font-weight:normal;text-shadow:0 0 1px rgba(0,0,0,0.9),1px 1px 1px rgba(0,0,0,0.95),1px 1px 2px rgba(0,0,0,0.7);">修复</div>
<div class="t" style="left:34px;top:664px;font-size:12px;line-height:18px;color:#fff;font-weight:normal;text-shadow:0 0 1px rgba(0,0,0,0.9),1px 1px 1px rgba(0,0,0,0.95),1px 1px 2px rgba(0,0,0,0.7);"><span class="l">USBWindo...</span></div>
<div class="t" style="left:57px;top:681px;font-size:12px;line-height:18px;color:#fff;font-weight:normal;text-shadow:0 0 1px rgba(0,0,0,0.9),1px 1px 1px rgba(0,0,0,0.95),1px 1px 2px rgba(0,0,0,0.7);">安装</div>
<div class="t" style="left:122px;top:664px;font-size:12px;line-height:18px;color:#fff;font-weight:normal;text-shadow:0 0 1px rgba(0,0,0,0.9),1px 1px 1px rgba(0,0,0,0.95),1px 1px 2px rgba(0,0,0,0.7);">视频底图</div>
<div class="t" style="left:-4px;top:765px;font-size:12px;line-height:18px;color:#fff;font-weight:normal;text-shadow:0 0 1px rgba(0,0,0,0.9),1px 1px 1px rgba(0,0,0,0.95),1px 1px 2px rgba(0,0,0,0.7);"><span class="l">ecv</span></div>
<div class="t" style="left:49px;top:765px;font-size:12px;line-height:18px;color:#fff;font-weight:normal;text-shadow:0 0 1px rgba(0,0,0,0.9),1px 1px 1px rgba(0,0,0,0.95),1px 1px 2px rgba(0,0,0,0.7);"><span class="l">wiztree</span></div>
<div class="t" style="left:134px;top:765px;font-size:12px;line-height:18px;color:#fff;font-weight:normal;text-shadow:0 0 1px rgba(0,0,0,0.9),1px 1px 1px rgba(0,0,0,0.95),1px 1px 2px rgba(0,0,0,0.7);">图片</div>
<div style="left:175px;top:512px;width:230px;height:276px;background:#f0f0f0;border:1px solid #cacaca;box-sizing:border-box;box-shadow:1px 1px 2px rgba(0,0,0,0.18);"></div>
<div style="left:178px;top:639px;width:224px;height:22px;background:#e5e5e5;"></div>
<div class="t" style="left:210px;top:516px;font-size:12px;line-height:18px;color:#6d6d6d;font-weight:normal;">打开<span class="l">(O)</span></div>
<div class="t" style="left:210px;top:538px;font-size:12px;line-height:18px;color:#6d6d6d;font-weight:normal;">资源管理器<span class="l">(E)</span></div>
<div style="left:206px;top:563px;width:196px;height:1px;background:#d7d7d7;"></div>
<div class="t" style="left:210px;top:567px;font-size:12px;line-height:18px;color:#6d6d6d;font-weight:normal;">将分区标记为活动分区<span class="l">(M)</span></div>
<div class="t" style="left:210px;top:589px;font-size:12px;line-height:18px;color:#6d6d6d;font-weight:normal;">更改驱动器号和路径<span class="l">(C)...</span></div>
<div class="t" style="left:210px;top:611px;font-size:12px;line-height:18px;color:#6d6d6d;font-weight:normal;">格式化<span class="l">(F)...</span></div>
<div style="left:206px;top:635px;width:196px;height:1px;background:#d7d7d7;"></div>
<div class="t" style="left:210px;top:640px;font-size:12px;line-height:18px;color:#6d6d6d;font-weight:normal;">扩展卷<span class="l">(X)...</span></div>
<div class="t" style="left:210px;top:662px;font-size:12px;line-height:18px;color:#6d6d6d;font-weight:normal;">压缩卷<span class="l">(H)...</span></div>
<div class="t" style="left:210px;top:684px;font-size:12px;line-height:18px;color:#6d6d6d;font-weight:normal;">添加镜像<span class="l">(A)...</span></div>
<div class="t" style="left:210px;top:706px;font-size:12px;line-height:18px;color:#6d6d6d;font-weight:normal;">删除卷<span class="l">(D)...</span></div>
<div style="left:206px;top:730px;width:196px;height:1px;background:#d7d7d7;"></div>
<div class="t" style="left:210px;top:735px;font-size:12px;line-height:18px;color:#6d6d6d;font-weight:normal;">属性<span class="l">(P)</span></div>
<div style="left:206px;top:759px;width:196px;height:1px;background:#d7d7d7;"></div>
<div class="t" style="left:210px;top:764px;font-size:12px;line-height:18px;color:#000;font-weight:bold;-webkit-text-stroke:0;">帮助<span class="l">(H)</span></div>
</body></html>
